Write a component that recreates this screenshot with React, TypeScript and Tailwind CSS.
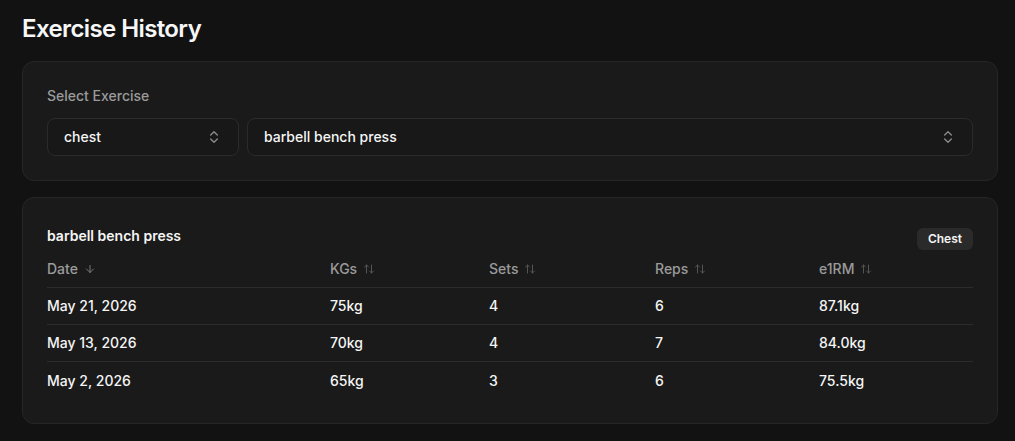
import React from 'react';
import { ArrowDown, ArrowUpDown, ChevronsUpDown } from 'lucide-react';

const COLUMNS = [
  { key: 'date', title: 'Date', sorted: true },
  { key: 'kgs', title: 'KGs' },
  { key: 'sets', title: 'Sets' },
  { key: 'reps', title: 'Reps' },
  { key: 'e1rm', title: 'e1RM' },
];

const ROWS = [
  { date: 'May 21, 2026', kgs: '75kg', sets: '4', reps: '6', e1rm: '87.1kg' },
  { date: 'May 13, 2026', kgs: '70kg', sets: '4', reps: '7', e1rm: '84.0kg' },
  { date: 'May 2, 2026', kgs: '65kg', sets: '3', reps: '6', e1rm: '75.5kg' },
];

const GRID = 'grid grid-cols-[283px_159px_166px_164px_1fr] items-center';

const Select: React.FC<{ value: string; className?: string }> = ({ value, className }) => (
  <div
    className={`flex h-[38px] items-center justify-between rounded-lg border border-[#2b2b2b] bg-[#181818] px-4 text-sm font-medium text-[#f5f5f5] ${className ?? ''}`}>
    <span>{value}</span>
    <ChevronsUpDown size={16} strokeWidth={2} className="text-[#8a8a8a]" />
  </div>
);

const App: React.FC = () => {
  return (
    <div
      className="min-h-[441px] bg-[#121212] pl-[22px] pr-[17px] pt-[13px] pb-6 text-white"
      style={{ fontFamily: 'Inter, "Noto Sans", sans-serif' }}>
      <h1 className="mb-4 text-2xl leading-8 font-semibold tracking-tight text-[#f7f7f7]">
        Exercise History
      </h1>

      <div className="flex flex-col gap-4">
        <div className="rounded-xl border border-[#262626] bg-[#1a1a1a] p-6">
          <div className="text-sm leading-5 font-medium text-[#9b9b9b]">Select Exercise</div>
          <div className="mt-3 flex gap-2">
            <Select value="chest" className="w-[192px]" />
            <Select value="barbell bench press" className="flex-1" />
          </div>
        </div>

        <div className="rounded-xl border border-[#262626] bg-[#1a1a1a] px-6 pt-[30px] pb-6">
          <div className="flex h-[22px] items-start justify-between">
            <span className="-mt-[2px] text-sm leading-5 font-semibold text-[#f5f5f5]">
              barbell bench press
            </span>
            <span className="flex h-[22px] items-center rounded-md bg-[#2a2a2a] px-[11px] text-xs font-semibold text-[#f5f5f5]">
              Chest
            </span>
          </div>

          <div className={`${GRID} h-[38px] border-b border-[#2c2c2c] text-sm font-medium text-[#9b9b9b]`}>
            {COLUMNS.map(({ key, title, sorted }) => (
              <div key={key} className="flex items-center gap-1.5">
                {title}
                {sorted ? (
                  <ArrowDown size={12} className="text-[#7a7a7a]" />
                ) : (
                  <ArrowUpDown size={12} className="text-[#555555]" />
                )}
              </div>
            ))}
          </div>

          {ROWS.map((row, i) => (
            <div
              key={row.date}
              className={`${GRID} h-[37px] text-sm font-medium text-[#f5f5f5] ${
                i < ROWS.length - 1 ? 'border-b border-[#2c2c2c]' : ''
              }`}>
              <div>{row.date}</div>
              <div>{row.kgs}</div>
              <div>{row.sets}</div>
              <div>{row.reps}</div>
              <div>{row.e1rm}</div>
            </div>
          ))}
        </div>
      </div>
    </div>
  );
};

export default App;
